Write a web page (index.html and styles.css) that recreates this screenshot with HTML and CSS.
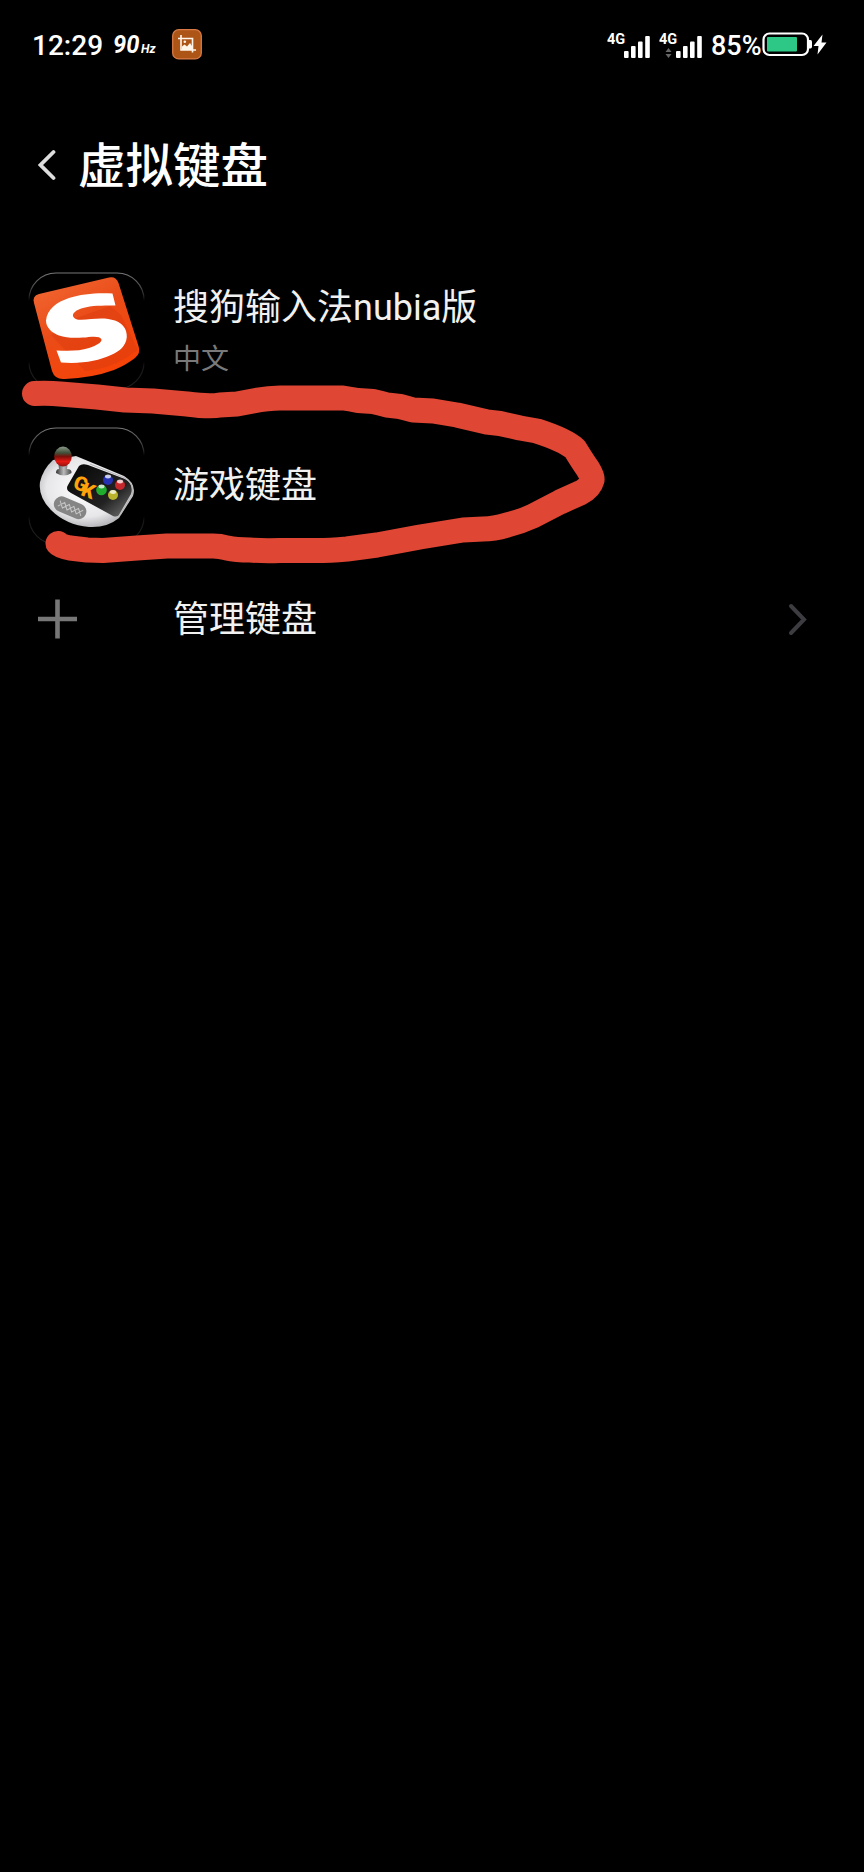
FILE: index.html
```html
<!DOCTYPE html>
<html lang="zh-CN">
<head>
<meta charset="utf-8">
<title>虚拟键盘</title>
<link rel="stylesheet" href="styles.css">
</head>
<body>
<main class="screen">
  <div class="status">
    <span class="clock">12:29</span>
    <span class="rate"><span class="digits">90</span><small class="hz">Hz</small></span>
    <svg class="shot" width="30" height="31" viewBox="0 0 30 31">
      <rect x=".7" y=".7" width="28.6" height="29.2" rx="6" fill="#ad5517" stroke="#d77a45" stroke-width="1.3"/>
      <path d="M6 9.500H20.500V23.500M9 6V21H24" fill="none" stroke="#fff5e8" stroke-width="1.600"/>
      <path d="M10 21V17.500L12.500 15.500L15 17.500L18 14L20 17V21Z" fill="#fff5e8"/>
      <circle cx="12.800" cy="12.800" r="1.300" fill="#fff5e8"/>
    </svg>
    <svg class="signal first" width="46" height="30" viewBox="0 0 46 30">
      <text x="0" y="14" class="net">4G</text>
      <g fill="#fff"><rect x="17" y="21" width="4.600" height="7" rx="1"/><rect x="24" y="16" width="4.600" height="12" rx="1"/><rect x="31" y="11.500" width="4.600" height="16.500" rx="1"/><rect x="38.200" y="6" width="4.600" height="22" rx="1"/></g>
    </svg>
    <svg class="signal" width="46" height="30" viewBox="0 0 46 30">
      <text x="0" y="14" class="net">4G</text>
      <path d="M6.500 22L9.500 18L12.500 22ZM6.500 24L9.500 28L12.500 24Z" fill="#666"/>
      <g fill="#fff"><rect x="17" y="21" width="4.600" height="7" rx="1"/><rect x="24" y="16" width="4.600" height="12" rx="1"/><rect x="31" y="11.500" width="4.600" height="16.500" rx="1"/><rect x="38.200" y="6" width="4.600" height="22" rx="1"/></g>
    </svg>
    <span class="percent">85%</span>
    <svg class="battery" width="66" height="26" viewBox="0 0 66 26">
      <rect x="1.500" y="2.500" width="44.500" height="21.500" rx="6" fill="none" stroke="#fff" stroke-width="2.200"/>
      <rect x="5" y="6" width="30" height="14.500" rx="1" fill="#2dc786"/>
      <path d="M47 9H48.500Q50 9 50 11V15.500Q50 17.500 48.500 17.500H47Z" fill="#fff"/>
      <path d="M60.500 3.500L51.500 15H56.500L55.500 23.500L64.500 11.500H59.500Z" fill="#fff"/>
    </svg>
  </div>

  <header class="header">
    <svg class="back" width="20" height="34" viewBox="0 0 20 34"><path d="M15.500 4L2.500 17L15.500 30" fill="none" stroke="#ddd" stroke-width="3.800" stroke-linecap="round" stroke-linejoin="miter"/></svg>
    <h1 class="title">虚拟键盘</h1>
  </header>

  <section class="list">
    <div class="row">
      <svg class="app" width="118" height="118" viewBox="0 0 118 118">
        <defs>
          <linearGradient id="edge" x1="0" y1="0" x2="0" y2="1"><stop offset="0" stop-color="#777"/><stop offset=".18" stop-color="#333"/><stop offset=".24" stop-color="#000"/><stop offset=".76" stop-color="#000"/><stop offset=".8" stop-color="#161616"/><stop offset="1" stop-color="#202020"/></linearGradient>
          <linearGradient id="orange" x1="0" y1="0" x2=".6" y2="1"><stop offset="0" stop-color="#f26b36"/><stop offset=".5" stop-color="#ea4c18"/><stop offset="1" stop-color="#f64308"/></linearGradient>
        </defs>
        <rect x="1" y="1" width="115" height="116" rx="27" fill="#000" stroke="url(#edge)" stroke-width="1.200"/>
        <path d="M11 22L81 5.500Q88 4 90.500 11L110.500 74Q113 81 107 86Q98 93 86 98Q64 106 37 107Q27 108 24 99L6 31Q4 24 11 22Z" fill="url(#orange)"/>
        <path d="M23 63L57 99Q80 97 98 86L110 78L93 43L82 34L46 47Z" fill="#dc3c10" opacity=".5"/>
        <path d="M84.500 21.500L87.500 33.500C73 33.500 64 33.500 55 36C48 38 44.500 41 45 44C46.500 49 55 48 63 47C72 46 80 46 87 48.500C95 51.500 99 57 98.800 65C98 74 92 79 83 83C70 89 54 92 33 90.500L28.500 78.500C42 79 52 79 61 76C69 73.500 74 70 73.500 67.500C72 63 62 65 55 65.500C46 66 38 66 31 63.500C23 60.500 18 55 18 48.500C19 37 29 30 41 26C53 22 70 20.500 84.500 21.500Z" fill="#fff"/>
      </svg>
      <div class="labels">
        <div class="name">搜狗输入法nubia版</div>
        <div class="lang">中文</div>
      </div>
    </div>

    <div class="row game">
      <svg class="app" width="118" height="118" viewBox="0 0 118 118">
        <defs>
          <radialGradient id="shell" cx=".48" cy=".45" r=".6"><stop offset="0" stop-color="#fff"/><stop offset=".68" stop-color="#e7e7ea"/><stop offset="1" stop-color="#a9a9ad"/></radialGradient>
          <linearGradient id="knob" x1="0" y1="0" x2="0" y2="1"><stop offset="0" stop-color="#8a9a87"/><stop offset=".32" stop-color="#3f5039"/><stop offset=".5" stop-color="#7b110a"/><stop offset=".75" stop-color="#e71712"/><stop offset="1" stop-color="#8c1410"/></linearGradient>
          <linearGradient id="panel" x1="0" y1="0" x2="1" y2="1"><stop offset="0" stop-color="#050505"/><stop offset=".65" stop-color="#222"/><stop offset="1" stop-color="#777"/></linearGradient>
          <linearGradient id="metal"><stop offset="0" stop-color="#333"/><stop offset=".5" stop-color="#bbb"/><stop offset="1" stop-color="#444"/></linearGradient>
        </defs>
        <rect x="1" y="1" width="115" height="116" rx="27" fill="#000" stroke="url(#edge)" stroke-width="1.200"/>
        <path d="M25 33L48 29L96 49Q109 57 105 69L91 91Q79 101 61 100Q38 98 23 83Q10 70 12 55Q15 42 25 33Z" fill="url(#shell)"/>
        <path d="M51 39Q54 36 60 38L97 52Q106 57 103 67L92 86Q90 91 85 89L43 66Q37 63 40 58Z" fill="url(#panel)"/>
        <path d="M62 37L97 51Q107 57 104 68L92 88" fill="none" stroke="#b9b9bb" stroke-width="1.200"/>
        <path d="M30 34H40L39 42Q44 42 43.500 46Q36 51 28 46Q28 42 31 42Z" fill="url(#metal)"/>
        <ellipse cx="35" cy="29.500" rx="8.800" ry="10" fill="url(#knob)"/>
        <g transform="translate(42 81) rotate(23)"><rect x="-17" y="-8" width="34" height="15.500" rx="7.700" fill="#858585"/><path d="M-12 -3L-7 3L-2 -3L3 3L8 -3L13 3M-12 3L-7 -3L-2 3L3 -3L8 3L13 -3" fill="none" stroke="#c8c8c8" stroke-width="1"/></g>
        <text class="gk" transform="translate(44 61) rotate(20)">G</text>
        <text class="gk" transform="translate(52 68) rotate(20)">K</text>
        <circle cx="80" cy="53" r="5" fill="#2431b1"/><circle cx="92" cy="58" r="5" fill="#c5282c"/><circle cx="73.500" cy="63" r="5.300" fill="#20ad2d"/><circle cx="85" cy="68" r="5" fill="#b9b42c"/>
        <g fill="#fff" opacity=".75"><ellipse cx="80" cy="49.500" rx="3" ry="1.900"/><ellipse cx="92" cy="54.500" rx="3" ry="1.900"/><ellipse cx="73.500" cy="59.500" rx="3" ry="1.900"/><ellipse cx="85" cy="65" rx="3" ry="1.900"/></g>
      </svg>
      <div class="name">游戏键盘</div>
    </div>

    <div class="row manage">
      <svg class="plus" width="40" height="40" viewBox="0 0 40 40"><path d="M0 20H39M19.500 .5V39.500" stroke="#777" stroke-width="4.600"/></svg>
      <div class="name">管理键盘</div>
      <svg class="next" width="20" height="34" viewBox="0 0 20 34"><path d="M3 4L16 17.500L3 31" fill="none" stroke="#3c3c41" stroke-width="4" stroke-linecap="round" stroke-linejoin="miter"/></svg>
    </div>
  </section>

  <svg class="mark" width="864" height="700" viewBox="0 0 864 700"><path d="M34.500 393.500Q50 393 60 394L97 397L125 400L153 401L187 404Q210 407 220 405L237 404L253 401Q268 398 280 398H343Q350 399 358 400.500L373 401.500Q380 403 387 405L400 406.500Q406 408 413 410L433 411L457 415L487 422L500 423.500L520 428L537 431Q565 440 575 449Q583 462 588 469Q593 477 592 480Q590 488 580 493L560 502L533 516Q520 522 507 525Q494 529 483 529L463 530L420 537L377 545L347 549Q325 551 310 550.500H280Q262 551 250 550Q236 550 227 548Q220 546 213 546H167L137 548L103 550.500L87 550L70 548Q60 546 58 543.500"/></svg>
</main>
</body>
</html>
```
FILE: styles.css
```css
body {
  margin: 0;
  background: #000;
}

.screen {
  position: relative;
  box-sizing: border-box;
  width: 864px;
  height: 1872px;
  overflow: hidden;
  background: #000;
  color: #f1f1f1;
  font-family: Roboto, "Noto Sans CJK SC", sans-serif;
}

.status {
  display: flex;
  align-items: center;
  box-sizing: border-box;
  height: 90px;
  padding-left: 32px;
  color: #fff;
}

.clock {
  width: 81px;
  font-size: 28px;
  font-weight: 500;
  line-height: 34px;
  padding-top: 2px;
  box-sizing: border-box;
}

.rate {
  display: flex;
  align-items: baseline;
  width: 59px;
  font-style: italic;
  font-weight: 700;
  line-height: 34px;
  padding-top: 2px;
  box-sizing: border-box;
}

.digits {
  width: 28px;
  font-size: 26px;
  transform: scaleX(0.91);
  transform-origin: left;
}

.hz {
  font-size: 13px;
  transform: scaleX(0.95);
  transform-origin: left;
}

.shot {
  margin-top: -2px;
}

.signal {
  margin-right: 6px;
}

.first {
  margin-left: 405px;
}

.net {
  fill: #fff;
  font-size: 14.5px;
  font-weight: 700;
}

.percent {
  width: 51px;
  font-size: 27px;
  font-weight: 500;
  line-height: 34px;
  padding-top: 1px;
}

.battery {
  margin-top: -2px;
}

.header {
  display: flex;
  align-items: center;
  height: 80px;
  padding: 35px 0 0 38px;
}

.title {
  margin: 0 0 0 20px;
  padding-top: 3px;
  color: #fff;
  font-size: 47.5px;
  font-weight: 500;
  line-height: 70px;
}

.list {
  padding: 67px 0 0 28px;
}

.row {
  display: flex;
  align-items: center;
  height: 118px;
}

.app {
  flex: none;
  margin-right: 27px;
}

.name {
  font-size: 36px;
  font-weight: 400;
  line-height: 54px;
  white-space: nowrap;
}

.lang {
  color: #797979;
  font-size: 28px;
  line-height: 42px;
  margin-top: 4px;
}

.game {
  margin-top: 37px;
}

.manage {
  height: 80px;
  margin-top: 34px;
}

.manage .name {
  padding-top: 2px;
}

.plus {
  margin: 0 95px 0 10px;
}

.next {
  margin: 0 56px 0 auto;
}

.gk {
  fill: #ffa30b;
  font-size: 20px;
  font-weight: 900;
}

.mark {
  position: absolute;
  top: 0;
  left: 0;
  fill: none;
  stroke: #df4634;
  stroke-width: 25;
  stroke-linecap: round;
  stroke-linejoin: round;
  pointer-events: none;
}
```
